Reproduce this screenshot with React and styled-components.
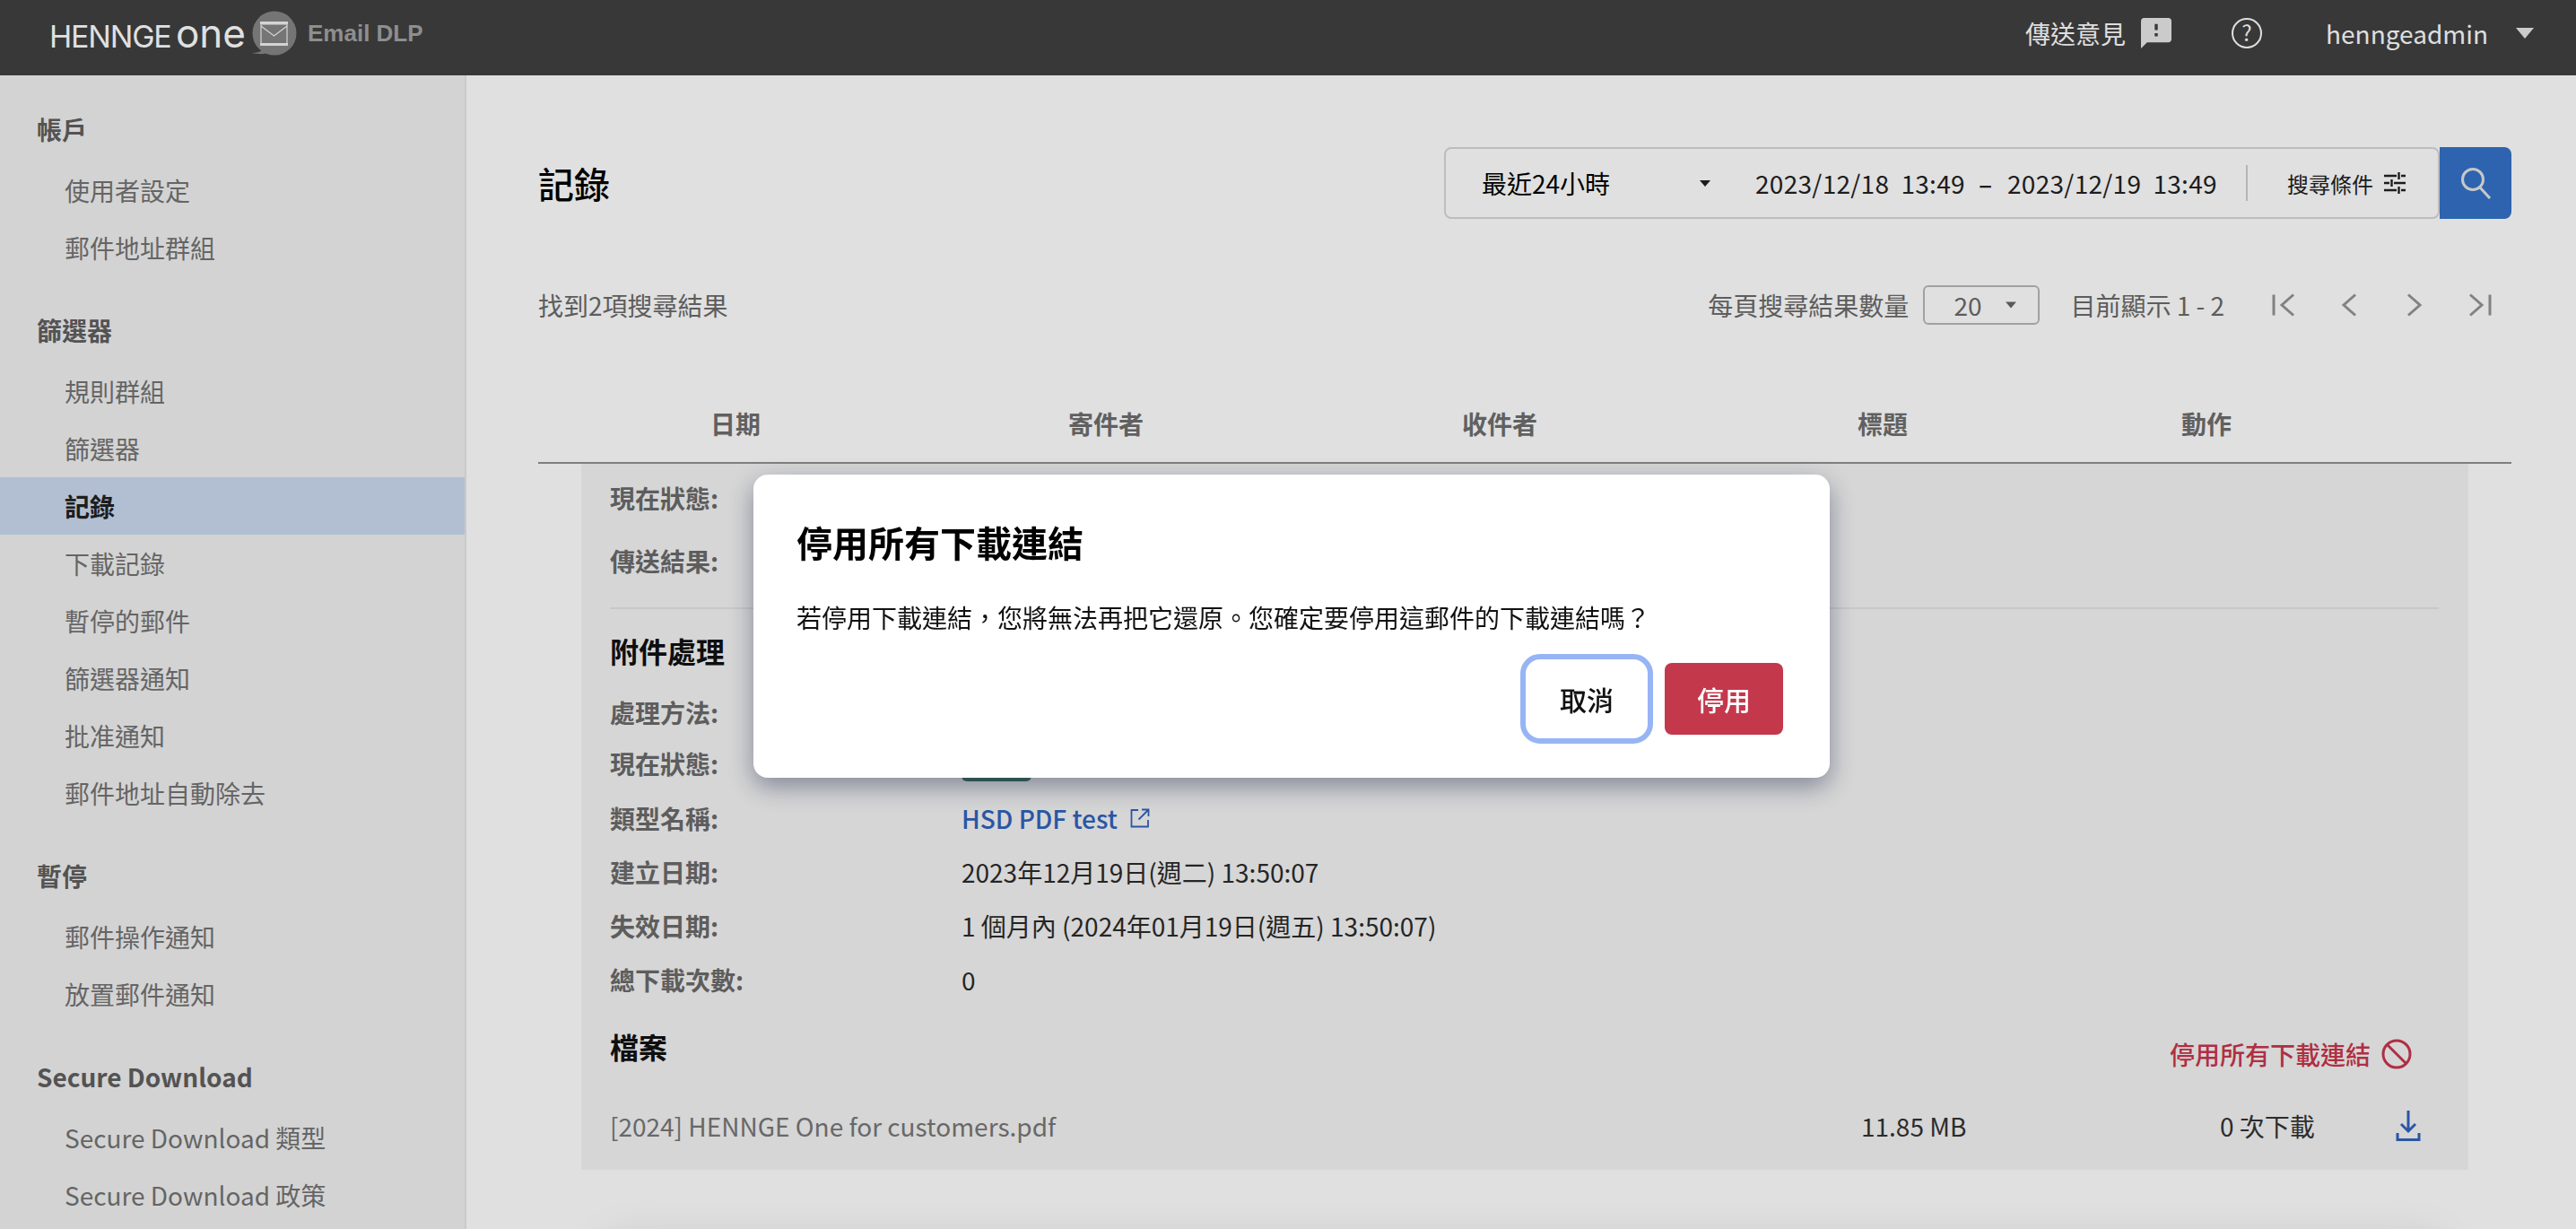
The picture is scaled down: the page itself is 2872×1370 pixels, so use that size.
import React from 'react';
import styled, { createGlobalStyle } from 'styled-components';

const sections = [
  { title: '帳戶', items: ['使用者設定', '郵件地址群組'] },
  { title: '篩選器', items: ['規則群組', '篩選器', '記錄', '下載記錄', '暫停的郵件', '篩選器通知', '批准通知', '郵件地址自動除去'] },
  { title: '暫停', items: ['郵件操作通知', '放置郵件通知'] },
  { title: 'Secure Download', items: ['Secure Download 類型', 'Secure Download 政策'] },
];

const columns = ['日期', '寄件者', '收件者', '標題', '動作'];

const LogoMark = () => (
  <svg width="52" height="50" viewBox="0 0 52 50">
    <circle cx="27" cy="25" r="24.500" fill="#868686" />
    <path d="M13 44c-2 2-6 3-11 3 5 1 11 2 17 0z" fill="#868686" />
    <rect x="11" y="12" width="31" height="3.500" fill="#f2f2f2" />
    <rect x="11" y="36" width="31" height="3" fill="#f2f2f2" />
    <path d="M12 15.500V36M41 15.500V36M12 17l14.500 11L41 17" fill="none" stroke="#f2f2f2" strokeWidth="1.200" />
  </svg>
);

const Caret = ({ w, h, color }) => (
  <svg width={w} height={h} viewBox="0 0 10 6">
    <path d="M0 0h10L5 6z" fill={color} />
  </svg>
);

const PagerIcon = ({ d }) => (
  <svg width="26" height="30" viewBox="0 0 26 30" fill="none" stroke="#949494" strokeWidth="3">
    <path d={d} />
  </svg>
);

export default function App() {
  return (
    <Page>
      <GlobalStyle />
      <Header>
        <Brand>
          <Wordmark>HENNGE <b>one</b></Wordmark>
          <LogoMark />
          <Product>Email DLP</Product>
        </Brand>
        <HeaderRight>
          <Feedback>
            傳送意見
            <svg width="34" height="34" viewBox="2 2 20 20" fill="#e8e8e8">
              <path d="M20 2H4c-1.1 0-1.99.9-1.99 2L2 22l4-4h14c1.1 0 2-.9 2-2V4c0-1.1-.9-2-2-2zm-7 12h-2v-2h2v2zm0-4h-2V6h2v4z" />
            </svg>
          </Feedback>
          <HelpIcon>?</HelpIcon>
          <User>henngeadmin</User>
          <Caret w={20} h={12} color="#e8e8e8" />
        </HeaderRight>
      </Header>

      <Body>
        <Sidebar>
          {sections.map((s) => (
            <NavSection key={s.title}>
              <NavHeading>{s.title}</NavHeading>
              {s.items.map((item) => (
                <NavItem key={item} $active={item === '記錄'}>{item}</NavItem>
              ))}
            </NavSection>
          ))}
        </Sidebar>

        <Main>
          <TitleRow>
            <PageTitle>記錄</PageTitle>
            <FilterGroup>
              <FilterBar>
                <RangeSelect>
                  最近24小時
                  <Caret w={12} h={9} color="#222" />
                </RangeSelect>
                <DateRange>2023/12/18  13:49</DateRange>
                <DateDash>–</DateDash>
                <DateRange>2023/12/19  13:49</DateRange>
                <FilterDivider />
                <ConditionButton>
                  搜尋條件
                  <svg width="24" height="24" viewBox="0 0 24 24" stroke="#222" strokeWidth="2.400" fill="none">
                    <path d="M0 4h14M19 4h5M16.500 0v8M0 12h6M11 12h13M8.500 8v8M0 20h14M19 20h5M16.500 16v8" />
                  </svg>
                </ConditionButton>
              </FilterBar>
              <SearchButton>
                <svg width="36" height="36" viewBox="0 0 36 36" fill="none" stroke="#e4e4e4" strokeWidth="3">
                  <circle cx="15" cy="14" r="11.500" />
                  <path d="M23 23l11 12" />
                </svg>
              </SearchButton>
            </FilterGroup>
          </TitleRow>

          <ResultRow>
            <ResultCount>找到2項搜尋結果</ResultCount>
            <Pager>
              <PagerText>每頁搜尋結果數量</PagerText>
              <PageSize>
                20
                <Caret w={12} h={8} color="#666" />
              </PageSize>
              <PagerText>目前顯示 1 - 2</PagerText>
              <PagerButtons>
                <PagerIcon d="M2 3.500v23M24 3.500L11 15l13 11.500" />
                <PagerIcon d="M20 3.500L7 15l13 11.500" />
                <PagerIcon d="M6 3.500L19 15 6 26.500" />
                <PagerIcon d="M2 3.500L15 15 2 26.500M24 3.500v23" />
              </PagerButtons>
            </Pager>
          </ResultRow>

          <TableHead>
            {columns.map((c) => <HeadCell key={c}>{c}</HeadCell>)}
          </TableHead>

          <DetailPanel>
            <DetailRow><DetailLabel>現在狀態:</DetailLabel></DetailRow>
            <DetailRow $mt={10}><DetailLabel>傳送結果:</DetailLabel></DetailRow>
            <Divider />
            <DetailHeading>附件處理</DetailHeading>
            <DetailRow $mt={9}><DetailLabel>處理方法:</DetailLabel></DetailRow>
            <DetailRow $h={54}>
              <DetailLabel>現在狀態:</DetailLabel>
              <StatusPill />
            </DetailRow>
            <DetailRow $mt={4}>
              <DetailLabel>類型名稱:</DetailLabel>
              <TypeLink>
                HSD PDF test
                <svg width="22" height="22" viewBox="0 0 22 22" fill="none" stroke="#3062bb" strokeWidth="1.800">
                  <path d="M9 2H1.500v18.500H20V13M13 1.500h7.500V9M20 2L9.500 12.500" />
                </svg>
              </TypeLink>
            </DetailRow>
            <DetailRow>
              <DetailLabel>建立日期:</DetailLabel>
              <DetailValue>2023年12月19日(週二) 13:50:07</DetailValue>
            </DetailRow>
            <DetailRow>
              <DetailLabel>失效日期:</DetailLabel>
              <DetailValue>1 個月內 (2024年01月19日(週五) 13:50:07)</DetailValue>
            </DetailRow>
            <DetailRow>
              <DetailLabel>總下載次數:</DetailLabel>
              <DetailValue>0</DetailValue>
            </DetailRow>

            <FilesHead>
              <DetailHeading>檔案</DetailHeading>
              <DisableLink>
                停用所有下載連結
                <svg width="34" height="34" viewBox="0 0 34 34" fill="none" stroke="#c8364d" strokeWidth="3">
                  <circle cx="17" cy="17" r="15" />
                  <path d="M6.500 6.500l21 21" />
                </svg>
              </DisableLink>
            </FilesHead>
            <FileRow>
              <FileName>[2024] HENNGE One for customers.pdf</FileName>
              <FileMeta>11.85 MB</FileMeta>
              <FileMeta>0 次下載</FileMeta>
              <svg width="28" height="36" viewBox="0 0 28 36" fill="none" stroke="#3062bb" strokeWidth="3">
                <path d="M14 1v23M6 16l8 8 8-8M2 26v7.500h24V26" />
              </svg>
            </FileRow>
          </DetailPanel>
          <NextRowEdge />
        </Main>
      </Body>

      <Backdrop>
        <Modal>
          <ModalTitle>停用所有下載連結</ModalTitle>
          <ModalText>若停用下載連結，您將無法再把它還原。您確定要停用這郵件的下載連結嗎？</ModalText>
          <ModalActions>
            <CancelButton>取消</CancelButton>
            <DangerButton>停用</DangerButton>
          </ModalActions>
        </Modal>
      </Backdrop>
    </Page>
  );
}

const GlobalStyle = createGlobalStyle`
  html, body {
    margin: 0;
    padding: 0;
    height: 100%;
    overflow: hidden;
    background: #fff;
  }
  body, button {
    font-family: "Noto Sans CJK TC", "Noto Sans", sans-serif;
  }
  * {
    box-sizing: border-box;
  }
`;

const Page = styled.div`
  width: 2872px;
  height: 1370px;
  overflow: hidden;
  display: flex;
  flex-direction: column;
  font-size: 28px;
`;

const Header = styled.header`
  height: 84px;
  flex: none;
  background: #404040;
  display: flex;
  align-items: center;
  justify-content: space-between;
  padding: 0 47px 10px 55px;
`;

const Brand = styled.div`
  display: flex;
  align-items: center;
`;

const Wordmark = styled.div`
  font-family: "Inter", sans-serif;
  font-size: 34px;
  letter-spacing: -1.2px;
  color: #fff;
  width: 224px;
  white-space: nowrap;
  b {
    font-weight: 400;
    font-size: 44px;
    letter-spacing: 0;
    margin-left: -3px;
  }
`;

const Product = styled.div`
  font-family: "Liberation Sans", sans-serif;
  font-weight: 700;
  font-size: 26px;
  color: #a2a2a2;
  margin-left: 12px;
`;

const HeaderRight = styled.div`
  display: flex;
  align-items: center;
  color: #fdfdfd;
`;

const Feedback = styled.div`
  display: flex;
  align-items: center;
  gap: 17px;
`;

const HelpIcon = styled.div`
  width: 34px;
  height: 34px;
  border: 2px solid #fdfdfd;
  border-radius: 50%;
  font-size: 24px;
  line-height: 28px;
  text-align: center;
  margin-left: 67px;
`;

const User = styled.div`
  margin-left: 71px;
  margin-right: 31px;
`;

const Body = styled.div`
  flex: 1;
  display: flex;
  min-height: 0;
`;

const Sidebar = styled.nav`
  width: 520px;
  flex: none;
  background: #f1f1f1;
  border-right: 2px solid #e6e6e6;
  padding-top: 28px;
  display: flex;
  flex-direction: column;
  gap: 28px;
`;

const NavSection = styled.div`
  display: flex;
  flex-direction: column;
`;

const NavHeading = styled.div`
  height: 64px;
  line-height: 64px;
  padding-left: 41px;
  margin-bottom: 4px;
  font-weight: 700;
  color: #5f5f5f;
`;

const NavItem = styled.div`
  height: 64px;
  line-height: 64px;
  padding-left: 72px;
  color: ${(p) => (p.$active ? '#222' : '#747474')};
  font-weight: ${(p) => (p.$active ? 700 : 400)};
  background: ${(p) => (p.$active ? '#cbdaf0' : 'transparent')};
`;

const Main = styled.main`
  flex: 1;
  min-width: 0;
  padding: 80px 72px 0 80px;
  background: #fff;
`;

const TitleRow = styled.div`
  display: flex;
  align-items: center;
  justify-content: space-between;
  height: 80px;
`;

const PageTitle = styled.h1`
  margin: 0;
  font-size: 40px;
  font-weight: 500;
  color: #000;
`;

const FilterGroup = styled.div`
  display: flex;
`;

const FilterBar = styled.div`
  width: 1110px;
  height: 80px;
  border: 2px solid #d8d8d8;
  border-radius: 8px;
  display: flex;
  align-items: center;
  color: #222;
  padding-left: 40px;
`;

const RangeSelect = styled.div`
  width: 305px;
  flex: none;
  display: flex;
  align-items: center;
  justify-content: space-between;
  color: #000;
  padding-right: 50px;
`;

const DateRange = styled.span`
  white-space: pre;
  width: 232px;
  letter-spacing: 0.3px;
`;

const DateDash = styled.span`
  width: 49px;
  text-align: center;
  font-weight: 500;
`;

const FilterDivider = styled.div`
  width: 2px;
  height: 40px;
  background: #d0d0d0;
  margin-left: 34px;
`;

const ConditionButton = styled.div`
  display: flex;
  align-items: center;
  gap: 12px;
  font-size: 24px;
  margin-left: 44px;
`;

const SearchButton = styled.div`
  width: 80px;
  height: 80px;
  background: #3571c8;
  border-radius: 0 8px 8px 0;
  display: flex;
  align-items: center;
  justify-content: center;
`;

const ResultRow = styled.div`
  display: flex;
  align-items: center;
  justify-content: space-between;
  height: 44px;
  margin-top: 74px;
  color: #6a6a6a;
`;

const ResultCount = styled.div``;

const Pager = styled.div`
  display: flex;
  align-items: center;
`;

const PagerText = styled.span`
  color: #6a6a6a;
`;

const PageSize = styled.div`
  width: 130px;
  height: 44px;
  border: 2px solid #b8b8b8;
  border-radius: 6px;
  margin: 0 34px 0 16px;
  display: flex;
  align-items: center;
  justify-content: space-between;
  padding: 0 24px 0 32px;
`;

const PagerButtons = styled.div`
  display: flex;
  align-items: center;
  gap: 47px;
  margin-left: 53px;
  margin-right: 22px;
`;

const TableHead = styled.div`
  display: grid;
  grid-template-columns: 440px 386px 492px 362px 360px 160px;
  height: 92px;
  margin-top: 63px;
  padding-top: 23px;
  border-bottom: 2px solid #919191;
`;

const HeadCell = styled.div`
  text-align: center;
  font-weight: 700;
  color: #6e6e6e;
  line-height: 48px;
`;

const DetailPanel = styled.section`
  margin: 0 48px;
  height: 787px;
  padding: 8px 33px 0 32px;
  background: #f4f4f4;
`;

const NextRowEdge = styled.div`
  height: 40px;
  margin: 80px 80px 0;
  box-shadow: 0 0 50px rgba(0, 0, 0, 0.13);
`;

const DetailRow = styled.div`
  display: flex;
  align-items: center;
  height: ${(p) => p.$h || 60}px;
  margin-top: ${(p) => p.$mt || 0}px;
`;

const DetailLabel = styled.div`
  width: 392px;
  flex: none;
  font-weight: 700;
  color: #6a6a6a;
`;

const DetailValue = styled.div`
  color: #2b2b2b;
`;

const StatusPill = styled.div`
  width: 78px;
  height: 40px;
  border-radius: 6px;
  background: #316e4f;
`;

const TypeLink = styled.a`
  display: flex;
  align-items: center;
  gap: 14px;
  color: #3062bb;
  font-weight: 500;
`;

const Divider = styled.div`
  height: 2px;
  margin-top: 22px;
  margin-bottom: 16px;
  background: #e4e4e4;
`;

const DetailHeading = styled.h3`
  margin: 0;
  font-size: 32px;
  font-weight: 700;
  line-height: 60px;
  color: #111;
`;

const FilesHead = styled.div`
  display: flex;
  justify-content: space-between;
  align-items: flex-start;
  height: 89px;
  margin-top: 14px;
  padding-right: 30px;
`;

const DisableLink = styled.a`
  display: flex;
  align-items: center;
  gap: 12px;
  height: 60px;
  margin-top: 9px;
  color: #c8364d;
  font-weight: 500;
`;

const FileRow = styled.div`
  display: grid;
  grid-template-columns: 1395px 400px 196px auto;
  align-items: center;
  height: 60px;
`;

const FileName = styled.div`
  color: #777;
`;

const FileMeta = styled.div`
  color: #333;
`;

const Backdrop = styled.div`
  position: fixed;
  inset: 0;
  background: rgba(0, 0, 0, 0.12);
`;

const Modal = styled.div`
  position: absolute;
  left: 840px;
  top: 529px;
  width: 1200px;
  height: 338px;
  background: #fff;
  border-radius: 16px;
  box-shadow: 0 10px 28px rgba(50, 58, 90, 0.5);
  padding: 45px 52px 0 48px;
  display: flex;
  flex-direction: column;
`;

const ModalTitle = styled.h2`
  margin: 0;
  font-size: 40px;
  line-height: 60px;
  font-weight: 700;
  color: #000;
`;

const ModalText = styled.p`
  margin: 34px 0 0;
  line-height: 40px;
  color: #111;
`;

const ModalActions = styled.div`
  display: flex;
  justify-content: flex-end;
  gap: 23px;
  margin-top: 31px;
`;

const CancelButton = styled.button`
  width: 128px;
  height: 80px;
  border: none;
  border-radius: 12px;
  background: #fff;
  color: #111;
  font-size: 30px;
  font-weight: 500;
  outline: 6px solid #97b5f4;
  outline-offset: 4px;
`;

const DangerButton = styled.button`
  width: 132px;
  height: 80px;
  border: none;
  border-radius: 8px;
  background: #c4384c;
  color: #fff;
  font-size: 30px;
  font-weight: 500;
`;
